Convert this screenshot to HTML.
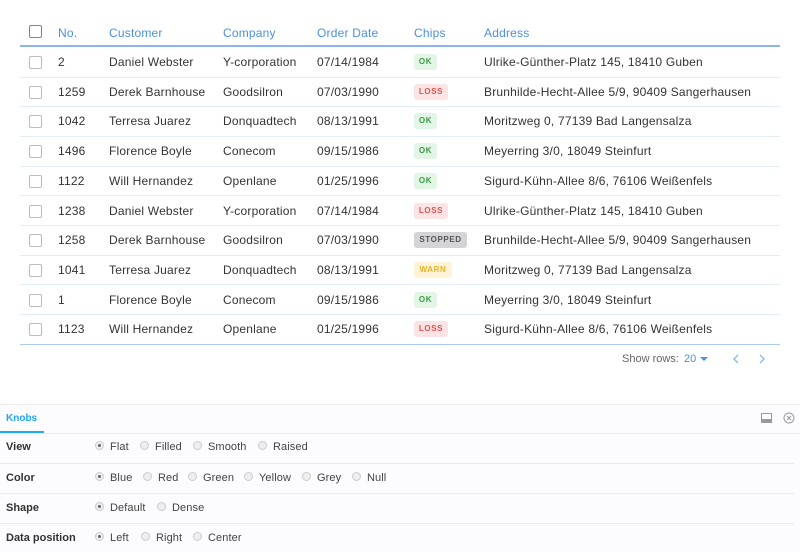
<!DOCTYPE html>
<html><head><meta charset="utf-8"><style>
*{margin:0;padding:0;box-sizing:border-box}
body{width:800px;height:552px;background:#fff;font-family:"Liberation Sans",sans-serif;position:relative;overflow:hidden;color:#333}
.a{position:absolute;white-space:nowrap}
.h{color:#4a90e2;font-size:12px;top:26px;letter-spacing:.2px}
.cb{position:absolute;left:29px;width:13px;height:13px;border:1.5px solid #bbb;border-radius:2px}
.line{position:absolute;left:20px;width:760px;height:1px;background:#e3eef9}
.t{font-size:12px;color:#333;letter-spacing:.2px}
.chip{position:absolute;left:414px;height:16px;border-radius:3px;font-size:8px;font-weight:bold;letter-spacing:.6px;line-height:16px;text-align:center}
.ok{background:#e3f5e5;color:#3b9b46;width:23px}
.loss{background:#fde4e4;color:#e05353;width:34px}
.stop{background:#d4d4d7;color:#555;width:53px}
.warn{background:#fdf3d8;color:#e8b422;width:38px}
.kp{position:absolute;left:0;top:404px;width:800px;height:148px;background:#fcfbfd;border-top:1px solid #eee}
.kl{font-size:11px;font-weight:bold;color:#333;left:6px}
.r{position:absolute;width:9px;height:9px;border-radius:50%;border:1px solid #ccc;background:#eee}
.r.on::after{content:"";position:absolute;left:2px;top:2px;width:3px;height:3px;border-radius:50%;background:#666}
.rl{font-size:11px;color:#444;letter-spacing:.1px}
.sep{position:absolute;left:0;width:794px;height:1px;background:#ebebeb}
</style></head><body>
<div class="cb" style="top:25px;border-color:#4a90e2"></div>
<div class="a h" style="left:58px">No.</div>
<div class="a h" style="left:109px">Customer</div>
<div class="a h" style="left:223px">Company</div>
<div class="a h" style="left:317px">Order Date</div>
<div class="a h" style="left:414px">Chips</div>
<div class="a h" style="left:484px">Address</div>
<div class="line" style="top:45px;height:2px;background:#8ab6ee"></div>

<div id="rows"></div>
<script>
var d=[["2","Daniel Webster","Y-corporation","07/14/1984","ok","OK","Ulrike-Günther-Platz 145, 18410 Guben"],
["1259","Derek Barnhouse","Goodsilron","07/03/1990","loss","LOSS","Brunhilde-Hecht-Allee 5/9, 90409 Sangerhausen"],
["1042","Terresa Juarez","Donquadtech","08/13/1991","ok","OK","Moritzweg 0, 77139 Bad Langensalza"],
["1496","Florence Boyle","Conecom","09/15/1986","ok","OK","Meyerring 3/0, 18049 Steinfurt"],
["1122","Will Hernandez","Openlane","01/25/1996","ok","OK","Sigurd-Kühn-Allee 8/6, 76106 Weißenfels"],
["1238","Daniel Webster","Y-corporation","07/14/1984","loss","LOSS","Ulrike-Günther-Platz 145, 18410 Guben"],
["1258","Derek Barnhouse","Goodsilron","07/03/1990","stop","STOPPED","Brunhilde-Hecht-Allee 5/9, 90409 Sangerhausen"],
["1041","Terresa Juarez","Donquadtech","08/13/1991","warn","WARN","Moritzweg 0, 77139 Bad Langensalza"],
["1","Florence Boyle","Conecom","09/15/1986","ok","OK","Meyerring 3/0, 18049 Steinfurt"],
["1123","Will Hernandez","Openlane","01/25/1996","loss","LOSS","Sigurd-Kühn-Allee 8/6, 76106 Weißenfels"]];
var h="",x=[58,109,223,317];
d.forEach(function(r,i){var c=62+i*29.7;
h+='<div class="cb" style="top:'+(c-6)+'px"></div>';
for(var j=0;j<4;j++)h+='<div class="a t" style="left:'+x[j]+'px;top:'+(c-7)+'px">'+r[j]+'</div>';
h+='<div class="chip '+r[4]+'" style="top:'+(c-8)+'px">'+r[5]+'</div>';
h+='<div class="a t" style="left:484px;top:'+(c-7)+'px">'+r[6]+'</div>';
h+='<div class="line" style="top:'+(c+14.5)+'px'+(i==9?';background:#a8cbf0':'')+'"></div>';});
document.getElementById("rows").innerHTML=h;
</script>
<div class="a" style="left:622px;top:353px;font-size:11px;color:#666">Show rows:</div>
<div class="a" style="left:684px;top:353px;font-size:11px;color:#4a90e2">20</div>
<div class="a" style="left:700px;top:357px;width:0;height:0;border-left:4px solid transparent;border-right:4px solid transparent;border-top:4px solid #4a90e2"></div>
<svg class="a" style="left:731px;top:353px" width="10" height="12"><path d="M7 2L3 6L7 10" stroke="#8ab6ee" stroke-width="1.3" fill="none"/></svg>
<svg class="a" style="left:757px;top:353px" width="10" height="12"><path d="M3 2L7 6L3 10" stroke="#8ab6ee" stroke-width="1.3" fill="none"/></svg>

<div class="kp"></div>
<div class="a" style="left:6px;top:413px;font-size:10px;font-weight:bold;color:#1ea7fd">Knobs</div>
<div class="a" style="left:0;top:431px;width:44px;height:2px;background:#1ea7fd"></div>
<div class="sep" style="top:433px;width:800px"></div>
<svg class="a" style="left:761px;top:413px" width="11" height="10"><rect x=".5" y=".5" width="10" height="9" fill="none" stroke="#999"/><rect x="1" y="6" width="9" height="3" fill="#999"/></svg>
<svg class="a" style="left:783px;top:412px" width="12" height="12"><circle cx="6" cy="6" r="5" fill="none" stroke="#999"/><path d="M4 4L8 8M8 4L4 8" stroke="#999"/></svg>
<div class="sep" style="top:463px"></div>
<div class="sep" style="top:493px"></div>
<div class="sep" style="top:523px"></div>
<div id="k"></div>
<script>
var k=[["View",447,[["Flat",95],["Filled",140],["Smooth",193],["Raised",258]]],
["Color",478,[["Blue",95],["Red",143],["Green",188],["Yellow",244],["Grey",302],["Null",352]]],
["Shape",508,[["Default",95],["Dense",157]]],
["Data position",538,[["Left",95],["Right",141],["Center",193]]]];
var s="";k.forEach(function(r){s+='<div class="a kl" style="top:'+(r[1]-6)+'px">'+r[0]+'</div>';
r[2].forEach(function(o,i){s+='<div class="r'+(i==0?' on':'')+'" style="left:'+o[1]+'px;top:'+(r[1]-6)+'px"></div><div class="a rl" style="left:'+(o[1]+15)+'px;top:'+(r[1]-6)+'px">'+o[0]+'</div>';});});
document.getElementById("k").innerHTML=s;
</script>
</body></html>
